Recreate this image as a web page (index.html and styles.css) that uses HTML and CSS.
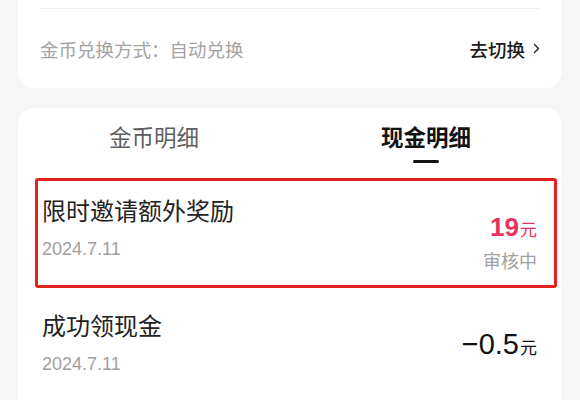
FILE: index.html
```html
<!DOCTYPE html>
<html>
<head>
  <title>现金明细</title>
  <link rel="stylesheet" href="styles.css">
</head>
<body>

  <div class="page">

    <!-- exchange setting card -->
    <div class="card exchange-card">
      <div class="divider"></div>
      <div class="exchange-row">
        <span class="exchange-label">金币兑换方式：自动兑换</span>
        <span class="switch-link">去切换
          <svg class="chevron" width="7" height="11" viewBox="0 0 7 11">
            <path d="M1.5 1.5 L5.5 5.5 L1.5 9.5" fill="none" stroke="#222" stroke-width="1.4" stroke-linecap="round" stroke-linejoin="round"/>
          </svg>
        </span>
      </div>
    </div>

    <!-- detail list card -->
    <div class="card detail-card">
      <div class="tabs">
        <div class="tab">
          <span class="tab-text">金币明细</span>
          <span class="tab-line"></span>
        </div>
        <div class="tab active">
          <span class="tab-text">现金明细</span>
          <span class="tab-line"></span>
        </div>
      </div>

      <div class="record highlighted">
        <div class="record-info">
          <div class="record-title">限时邀请额外奖励</div>
          <div class="record-date">2024.7.11</div>
        </div>
        <div class="record-amount">
          <div class="amount pink"><span class="num">19</span><span class="unit">元</span></div>
          <div class="status">审核中</div>
        </div>
      </div>

      <div class="record">
        <div class="record-info">
          <div class="record-title">成功领现金</div>
          <div class="record-date">2024.7.11</div>
        </div>
        <div class="record-amount">
          <div class="amount big"><span class="num">&minus;0.5</span><span class="unit">元</span></div>
        </div>
      </div>
    </div>

  </div>

</body>
</html>
```

FILE: styles.css
```css
body {
  margin: 0;
  background-color: #f6f6f6;
  font-family: "Liberation Sans", "Noto Sans CJK SC", sans-serif;
  color: #222222;
}

.page {
  padding: 0 18px;
}

.card {
  background-color: #ffffff;
}

/* top card, its upper part is scrolled off */
.exchange-card {
  padding-top: 8px;
  border-radius: 0 0 16px 16px;
}

.divider {
  height: 1px;
  margin: 0 22px;
  background-color: #f0f0f0;
}

.exchange-row {
  height: 79px;
  padding: 0 22px;
  display: flex;
  align-items: center;
  justify-content: space-between;
  font-size: 18.5px;
}

.exchange-label {
  color: #a3a3a3;
}

.switch-link {
  display: flex;
  align-items: center;
  gap: 8px;
  color: #1a1a1a;
  font-weight: 500;
}

.chevron {
  display: block;
}

/* detail card */
.detail-card {
  margin-top: 20px;
  border-radius: 16px 16px 0 0;
}

.tabs {
  display: grid;
  grid-template-columns: 1fr 1fr;
  padding-top: 16px;
  padding-bottom: 12px;
}

.tab {
  display: flex;
  flex-direction: column;
  align-items: center;
}

.tab-text {
  font-size: 22.5px;
  line-height: 30px;
  color: #5e5e5e;
}

.tab-line {
  width: 26px;
  height: 3px;
  margin-top: 6px;
  border-radius: 2px;
}

.tab.active .tab-text {
  color: #111111;
  font-weight: 700;
}

.tab.active .tab-line {
  background-color: #111111;
}

.record {
  position: relative;
  height: 115px;
  box-sizing: border-box;
  padding: 21px 25px 0 24px;
  display: flex;
  justify-content: space-between;
  align-items: flex-start;
}

/* red annotation frame */
.record.highlighted::after {
  content: "";
  position: absolute;
  top: 3px;
  bottom: 2px;
  left: 17px;
  right: 5px;
  border: 3px solid #e3211d;
  border-radius: 3px;
}

.record-title {
  font-size: 24px;
  line-height: 32px;
  color: #222222;
}

.record-date {
  margin-top: 9px;
  font-size: 18px;
  line-height: 24px;
  color: #a0a0a0;
}

.record-amount {
  padding-top: 16px;
  display: flex;
  flex-direction: column;
  align-items: flex-end;
}

.amount {
  white-space: nowrap;
}

.amount .unit {
  font-size: 17px;
  margin-left: 1px;
}

.amount.pink {
  color: #e6335c;
  line-height: 30px;
}

.amount.pink .num {
  font-size: 26px;
  font-weight: 700;
}

.amount.big {
  color: #111111;
  line-height: 34px;
}

.amount.big .num {
  font-size: 29px;
}

.status {
  margin-top: 5px;
  font-size: 18px;
  line-height: 22px;
  color: #a0a0a0;
}
```
